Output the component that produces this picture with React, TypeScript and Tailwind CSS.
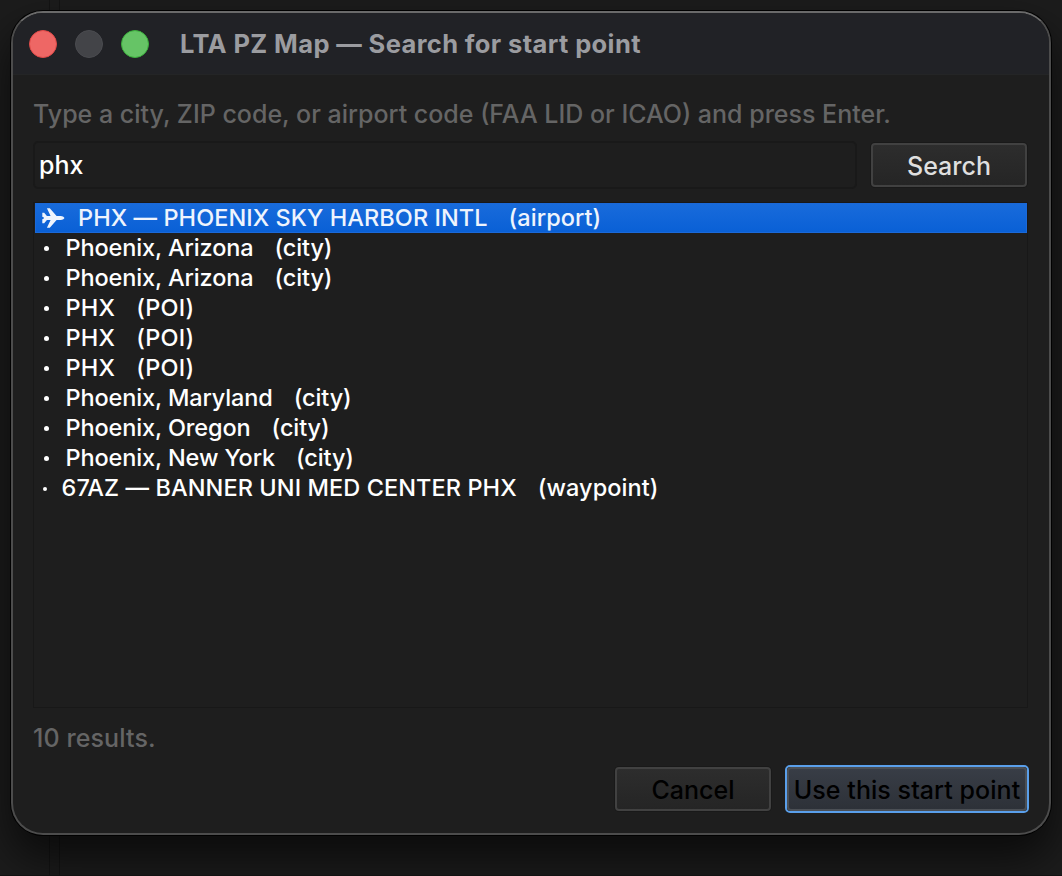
import { useState } from "react";

type Result = {
  label: string;
  kind: "airport" | "city" | "POI" | "waypoint";
};

const RESULTS: Result[] = [
  { label: "PHX — PHOENIX SKY HARBOR INTL", kind: "airport" },
  { label: "Phoenix, Arizona", kind: "city" },
  { label: "Phoenix, Arizona", kind: "city" },
  { label: "PHX", kind: "POI" },
  { label: "PHX", kind: "POI" },
  { label: "PHX", kind: "POI" },
  { label: "Phoenix, Maryland", kind: "city" },
  { label: "Phoenix, Oregon", kind: "city" },
  { label: "Phoenix, New York", kind: "city" },
  { label: "67AZ — BANNER UNI MED CENTER PHX", kind: "waypoint" },
];

const TRACKING: Record<Result["kind"], string> = {
  airport: "tracking-[0.06px]",
  city: "tracking-[-0.12px]",
  POI: "tracking-[0.2px]",
  waypoint: "tracking-[0.08px]",
};

function PlaneIcon() {
  return (
    <svg width="23" height="20" viewBox="0 0 23 20" fill="currentColor">
      <path d="M0.3 4.8H2.2L4.9 8H8.6L4.9 0.3H7.8L14.6 7.9L18.6 8C20.8 8.2 22.4 9.2 22.4 10C22.4 10.8 20.8 11.8 18.6 12L14.6 12.1L7.8 19.7H4.9L8.6 12H4.9L2.2 15.2H0.3V11.2L1.9 10.4V9.6L0.3 8.8Z" />
    </svg>
  );
}

function Marker({ kind }: { kind: Result["kind"] }) {
  if (kind === "airport") {
    return (
      <span className="flex w-9 shrink-0 items-center">
        <PlaneIcon />
      </span>
    );
  }
  if (kind === "waypoint") {
    return (
      <span className="flex w-[19.5px] shrink-0 items-center">
        <span className="mt-0.5 ml-px size-[3.5px] rounded-full bg-white" />
      </span>
    );
  }
  return (
    <span className="flex w-[23.5px] shrink-0 items-center">
      <span className="mt-px ml-[1.5px] size-[5.5px] rounded-full bg-white" />
    </span>
  );
}

function TitleBar() {
  return (
    <div className="flex h-[62px] shrink-0 items-center gap-[18px] border-b border-[#242526] bg-[#212226] pl-4">
      <span className="size-7 rounded-full border border-[#e04a48] bg-[#ee6765]" />
      <span className="size-7 rounded-full border border-[#4b4c50] bg-[#434448]" />
      <span className="size-7 rounded-full border border-[#3bb03c] bg-[#66c466]" />
      <h1 className="ml-[13px] text-[25.5px] leading-[30px] font-bold tracking-[0.38px] text-[#9b9ca0]">
        LTA PZ Map — Search for start point
      </h1>
    </div>
  );
}

const buttonClass =
  "flex h-[46px] w-[158px] items-center justify-center rounded-[5px] border border-[#191919] bg-[#191919] text-[25px]";
const buttonFace =
  "flex h-11 w-full items-center justify-center rounded border-2 border-[#414141] bg-linear-to-b from-[#2d2d2d] to-[#252525] pt-[3px]";

export default function App() {
  const [query, setQuery] = useState("phx");
  const [selected, setSelected] = useState(0);

  return (
    <div className="relative flex h-[876px] w-[1062px] flex-col overflow-hidden bg-[#1c1c1c] p-[11px] font-['Inter',sans-serif] font-[450]">
      <div className="absolute inset-y-0 left-[49px] w-[11px] border-x border-[#141414]" />

      <div className="relative flex h-[824px] w-[1040px] flex-col overflow-hidden rounded-[32px] border-2 border-[#4c4c4c] border-t-[#6a6a6a] bg-[#1e1e1e] shadow-[0_0_0_1px_#000,0_22px_44px_2px_rgba(0,0,0,0.62)]">
        <TitleBar />

        <div className="flex flex-1 flex-col pr-[21px] pl-5">
          <p className="mt-6 text-[25px] leading-[30px] whitespace-nowrap text-[#656565]">
            Type a city, ZIP code, or airport code (FAA LID or ICAO) and press Enter.
          </p>

          <div className="mt-3 flex items-center gap-[13px]">
            <input
              value={query}
              onChange={(e) => setQuery(e.target.value)}
              className="h-12 w-[824px] rounded-[5px] border-2 border-[#191919] bg-[#1e1e1e] px-1 text-[25px] text-white outline-none"
            />
            <button className={buttonClass}>
              <span className={`${buttonFace} text-[#dfdfdf]`}>Search</span>
            </button>
          </div>

          <ul className="mt-[13px] h-[506px] border border-[#181818] pl-px text-[23.5px] text-white">
            {RESULTS.map((r, i) => (
              <li
                key={i}
                onClick={() => setSelected(i)}
                className={`flex h-[30px] items-center leading-[30px] whitespace-pre ${TRACKING[r.kind]} ${
                  i === selected
                    ? "border border-[#1b69d8] bg-linear-to-b from-[#186bdb] to-[#0960d6] pl-1.5 text-[#eef4fd]"
                    : "pl-[7px]"
                }`}
              >
                <Marker kind={r.kind} />
                <span>{r.label}</span>
                <span className="ml-[21px]">({r.kind})</span>
              </li>
            ))}
          </ul>

          <p className="mt-[15px] text-[25px] leading-[30px] tracking-[0.1px] text-[#656565]">10 results.</p>

          <div className="mt-3 -mr-px flex items-center justify-end gap-[13px]">
            <button className={buttonClass}>
              <span className={`${buttonFace} text-black`}>Cancel</span>
            </button>
            <button className="flex h-12 w-[244px] rounded-[5px] border-2 border-[#5a9fea] text-[25px] text-black">
              <span className="flex h-11 w-full items-center justify-center rounded-sm border-2 border-[#4b4f55] bg-linear-to-b from-[#383d46] to-[#2d3138] pt-[3px] tracking-[0.06px] whitespace-nowrap">
                Use this start point
              </span>
            </button>
          </div>
        </div>
      </div>

      <div className="absolute inset-x-0 bottom-0 h-px bg-[#121212]" />
    </div>
  );
}
